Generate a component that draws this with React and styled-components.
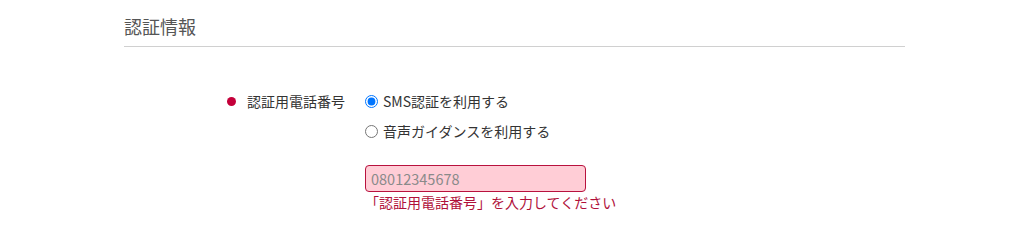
import React, { useState } from 'react';
import styled, { createGlobalStyle } from 'styled-components';

const GlobalStyle = createGlobalStyle`
  html, body {
    margin: 0;
    padding: 0;
    background: #fff;
  }
  body {
    font-family: "Noto Sans CJK JP", "Noto Sans", sans-serif;
    color: #333;
  }
`;

const Section = styled.section`
  width: 781px;
  margin-left: 124px;
`;

const Heading = styled.h2`
  margin: 0;
  padding: 12px 0 6px;
  font-size: 18px;
  line-height: 28px;
  font-weight: 400;
  color: #555;
  border-bottom: 1px solid #d0d0d0;
`;

const Row = styled.div`
  display: flex;
  align-items: flex-start;
  margin-top: 44px;
  padding-left: 103px;
`;

const Required = styled.span`
  width: 9px;
  height: 9px;
  margin-top: 6px;
  border-radius: 50%;
  background: #c4003a;
  flex-shrink: 0;
`;

const Label = styled.div`
  width: 118px;
  margin-left: 11px;
  font-size: 14px;
  line-height: 20px;
  color: #333;
`;

const Field = styled.div`
  display: flex;
  flex-direction: column;
`;

const RadioList = styled.div`
  display: flex;
  flex-direction: column;
  gap: 10px;
`;

const RadioLabel = styled.label`
  display: flex;
  align-items: center;
  gap: 5px;
  font-size: 14px;
  line-height: 20px;
  color: #333;
  cursor: pointer;
`;

const Radio = styled.input`
  margin: 0;
  width: 13px;
  height: 13px;
`;

const PhoneInput = styled.input`
  box-sizing: border-box;
  margin-top: 24px;
  width: 221px;
  height: 27px;
  padding: 0 5px;
  border: 1px solid #b8123e;
  border-radius: 4px;
  background: #ffcdd6;
  font-family: inherit;
  font-size: 14.5px;
  color: #333;
  outline: none;

  &::placeholder {
    color: #8a8a8a;
  }
`;

const ErrorText = styled.p`
  margin: 0;
  font-size: 14px;
  line-height: 20px;
  color: #b0103a;
`;

export default function App() {
  const [method, setMethod] = useState('sms');
  const [phone, setPhone] = useState('');

  return (
    <>
      <GlobalStyle />
      <Section>
        <Heading>認証情報</Heading>
        <Row>
          <Required />
          <Label>認証用電話番号</Label>
          <Field>
            <RadioList>
              <RadioLabel>
                <Radio
                  type="radio"
                  name="method"
                  checked={method === 'sms'}
                  onChange={() => setMethod('sms')}
                />
                SMS認証を利用する
              </RadioLabel>
              <RadioLabel>
                <Radio
                  type="radio"
                  name="method"
                  checked={method === 'voice'}
                  onChange={() => setMethod('voice')}
                />
                音声ガイダンスを利用する
              </RadioLabel>
            </RadioList>
            <PhoneInput
              type="tel"
              placeholder="08012345678"
              value={phone}
              onChange={(e) => setPhone(e.target.value)}
            />
            <ErrorText>「認証用電話番号」を入力してください</ErrorText>
          </Field>
        </Row>
      </Section>
    </>
  );
}
